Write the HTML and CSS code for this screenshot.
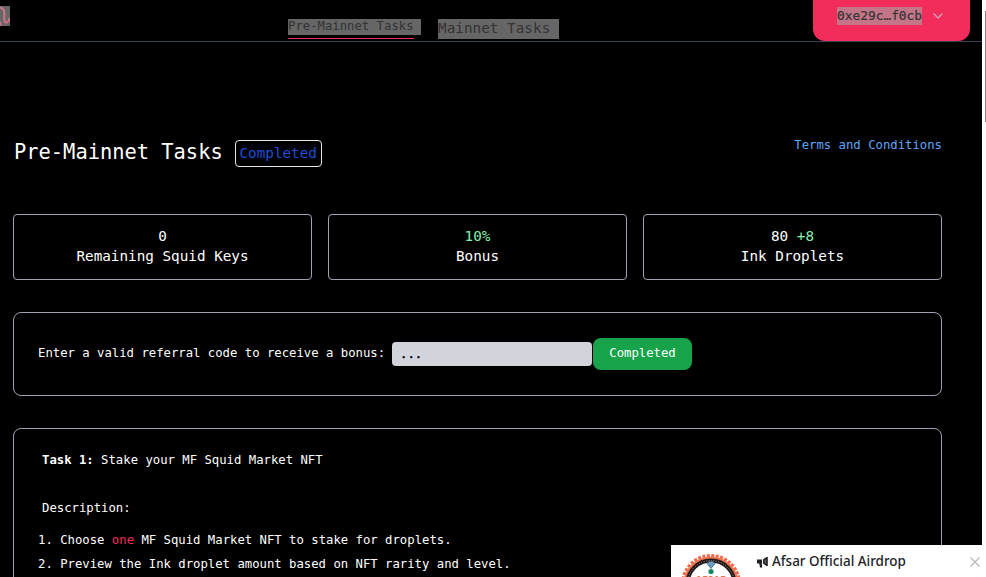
FILE: index.html
```
<!DOCTYPE html>
<html lang="en">
<head>
    <meta charset="UTF-8">
    <meta name="viewport" content="width=device-width, initial-scale=1.0">
    <title>Pre-Mainnet Tasks</title>
    <link rel="stylesheet" href="styles.css">
</head>
<body>
    <div id="page">
        <header class="header">
            <div class="logo">
                <svg width="10" height="20" viewBox="0 0 10 20" fill="none" stroke="#ca7487" stroke-width="2.1">
                    <path d="M-1 1.700C3 1.500 4.300 4 4.300 7v6c0 2.200.7 3.500 2 3.500 1.500 0 2.700-1.500 3-4.500"/>
                    <path d="M-1 15.500c1.200 0 1.500 1 1.500 4.500"/>
                </svg>
            </div>
            <nav class="nav">
                <a class="nav-link active"><span>Pre-Mainnet Tasks</span></a>
                <a class="nav-link"><span>Mainnet Tasks</span></a>
            </nav>
            <button class="wallet-btn">
                <span>0xe29c…f0cb</span>
                <svg width="10" height="6" viewBox="0 0 10 6" fill="none" stroke="#c9a3b3" stroke-width="1.4"><path d="M.6.6 5 5 9.400.6"/></svg>
            </button>
        </header>
        <main class="content">
            <div class="title-row">
                <h1>Pre-Mainnet Tasks</h1>
                <span class="badge">Completed</span>
                <a class="terms">Terms and Conditions</a>
            </div>
            <div class="stats">
                <div class="stat">
                    <div>0</div>
                    <div>Remaining Squid Keys</div>
                </div>
                <div class="stat">
                    <div class="green">10%</div>
                    <div>Bonus</div>
                </div>
                <div class="stat">
                    <div>80 <span class="green">+8</span></div>
                    <div>Ink Droplets</div>
                </div>
            </div>
            <div class="panel referral">
                <label for="code">Enter a valid referral code to receive a bonus:</label>
                <input id="code" type="text" value="...">
                <button class="done-btn">Completed</button>
            </div>
            <div class="panel task">
                <p class="task-title"><b>Task 1:</b> Stake your MF Squid Market NFT</p>
                <p class="task-desc">Description:</p>
                <div class="steps">
                    <div>1. Choose <span class="red">one</span> MF Squid Market NFT to stake for droplets.</div>
                    <div>2. Preview the Ink droplet amount based on NFT rarity and level.</div>
                </div>
            </div>
        </main>
    </div>
    <div class="scrollbar"><div class="thumb"></div></div>
    <div class="toast">
        <svg class="toast-logo" width="60" height="24" viewBox="0 0 60 24">
            <circle cx="30" cy="31" r="28" fill="none" stroke="#f26a4b" stroke-width="4" stroke-dasharray="3 1.400"/>
            <circle cx="30" cy="31" r="26" fill="#fff" stroke="#ef7650" stroke-width="3"/>
            <circle cx="30" cy="31" r="23.500" fill="#fff" stroke="#24191a" stroke-width="4"/>
            <circle cx="30" cy="31" r="23.500" fill="none" stroke="#a28c82" stroke-width="1" stroke-dasharray="1 1.500"/>
            <path d="M26 10.500l2-2h4l2 2-4 5z" fill="#6c9fc5" stroke="#38617f" stroke-width=".8"/>
            <circle cx="30" cy="18.500" r="2.600" fill="#158468"/>
            <text class="logo-text" x="30" y="30.500" text-anchor="middle">AFSAR</text>
        </svg>
        <svg class="horn" width="11" height="11" viewBox="0 0 11 11" fill="#202124">
            <path d="M0 2.600h5v4H4.700l.6 3.800H3L2.200 6.600H0zM6 2.500 9.400 0h1.400v9L9.400 9 6 6.600z"/>
            <path d="M7.300 3.400 9.300 2v5.200L7.300 5.800z" fill="#555"/>
        </svg>
        <span class="toast-title">Afsar Official Airdrop</span>
        <svg class="close" width="10" height="10" viewBox="0 0 10 10" stroke="#b9b9b9" stroke-width="1.200"><path d="M.5.500l9 9M9.500.500l-9 9"/></svg>
    </div>
</body>
</html>
```
FILE: styles.css
```
* {
    box-sizing: border-box;
}
body {
    margin: 0;
    display: flex;
    height: 577px;
    overflow: hidden;
    background-color: #000;
    color: #fff;
    font-family: "DejaVu Sans Mono", monospace;
    font-size: 12.27px;
}
button, input {
    font-family: inherit;
    font-size: inherit;
    border: none;
}
#page {
    width: 982px;
    height: 577px;
    overflow: hidden;
}
.header {
    display: flex;
    align-items: flex-start;
    height: 42px;
    border-bottom: 1px solid #374151;
}
.logo {
    width: 10px;
    height: 20px;
    margin-top: 6px;
    background-color: #666;
}
.logo svg {
    display: block;
}
.nav {
    display: flex;
    gap: 17px;
    margin-left: 278px;
    padding-top: 19px;
}
.nav-link span {
    display: block;
    background-color: #666;
    color: #333;
    width: 121px;
    height: 20px;
    line-height: 19px;
    font-size: 14.35px;
    white-space: nowrap;
}
.nav-link.active span {
    width: 133px;
    height: 16px;
    line-height: 14px;
    font-size: 12.27px;
}
.nav-link.active::after {
    content: "";
    display: block;
    width: 126px;
    height: 1px;
    margin-top: 3px;
    background-color: #f22d5c;
}
.wallet-btn {
    display: flex;
    align-items: flex-start;
    gap: 11px;
    width: 157px;
    height: 41px;
    margin-left: auto;
    margin-right: 12px;
    padding: 7px 0 0 24px;
    border-radius: 0 0 12px 12px;
    background-color: #f22d5c;
    font-size: 12.85px;
}
.wallet-btn span {
    width: 85px;
    height: 18px;
    line-height: 17px;
    background-color: #c57588;
    color: #333;
    white-space: nowrap;
    -webkit-text-stroke: 0.2px #333;
}
.wallet-btn svg {
    margin-top: 6px;
}
.content {
    padding: 98px 40px 0 13px;
}
.title-row {
    display: flex;
    align-items: flex-start;
    height: 74px;
}
h1 {
    margin: 0;
    padding-left: 1px;
    font-size: 20.4px;
    font-weight: normal;
    line-height: 25px;
}
.badge {
    width: 87px;
    height: 27px;
    margin-left: 12px;
    border: 1px solid #e5e7eb;
    border-radius: 4px;
    line-height: 25px;
    text-align: center;
    font-size: 14.3px;
    color: #1d4ed8;
}
.terms {
    margin-left: auto;
    line-height: 11px;
    color: #60a5fa;
}
.stats {
    display: grid;
    grid-template-columns: repeat(3, 1fr);
    gap: 16px;
}
.stat {
    height: 66px;
    padding-top: 11px;
    border: 1px solid #9ca3af;
    border-radius: 4px;
    text-align: center;
    font-size: 14.3px;
    line-height: 20px;
}
.green {
    color: #86efac;
}
.red {
    color: #f22d5c;
}
.panel {
    margin-top: 32px;
    border: 1px solid #9ca3af;
    border-radius: 8px;
}
.referral {
    display: flex;
    align-items: center;
    height: 84px;
    padding-left: 24px;
}
.referral label {
    width: 354px;
    padding-bottom: 3px;
    white-space: nowrap;
}
.referral input {
    width: 200px;
    height: 24px;
    padding: 0 8px 1px;
    border-radius: 4px;
    background-color: #d1d5db;
    color: #000;
    -webkit-text-stroke: 0.4px #000;
}
.done-btn {
    width: 99px;
    height: 32px;
    margin-left: 1px;
    padding: 0 0 2px;
    border-radius: 8px;
    background-color: #16a34a;
    color: #fff;
}
.task {
    height: 300px;
    padding: 19px 24px;
    line-height: 24px;
}
.task p {
    margin: 0 0 0 4px;
}
.task .task-desc {
    margin-top: 24px;
}
.steps {
    margin-top: 8px;
}
.scrollbar {
    width: 4px;
    height: 577px;
    padding: 11px 0 0 3px;
    background-color: #fcfcfc;
}
.thumb {
    height: 111px;
    background-color: #858585;
}
.toast {
    position: absolute;
    right: 0;
    bottom: 0;
    display: flex;
    align-items: flex-start;
    width: 315px;
    height: 32px;
    padding-left: 10px;
    overflow: hidden;
    background-color: #fff;
    color: #202124;
    font-family: "Noto Sans", sans-serif;
    font-weight: 500;
    font-size: 13.45px;
}
.toast-logo {
    margin-top: 8px;
}
.logo-text {
    font-size: 10px;
    font-weight: bold;
    fill: #e8734a;
}
.horn {
    margin: 12px 4px 0 16px;
}
.toast-title {
    line-height: 33px;
    white-space: nowrap;
}
.close {
    margin: 12px 6px 0 auto;
}
```
